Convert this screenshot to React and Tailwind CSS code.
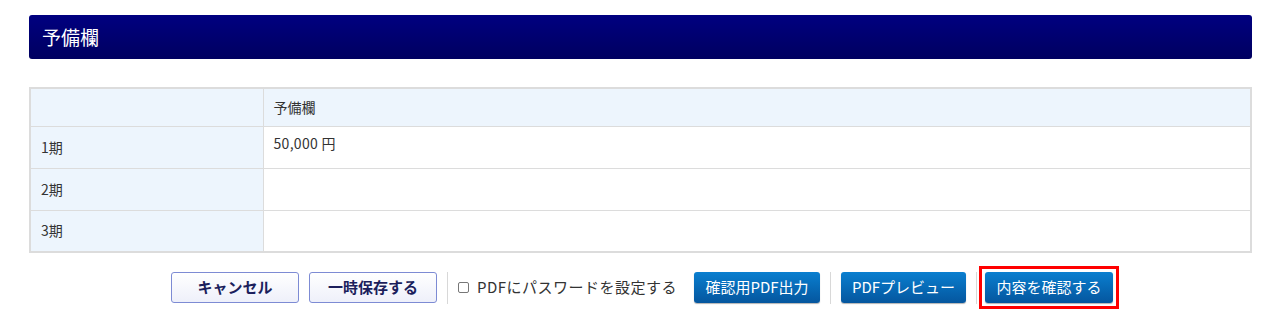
const font = "font-['Meiryo','Noto_Sans_CJK_JP',sans-serif]";

const rows = [
  { label: "1期", value: "50,000 円" },
  { label: "2期", value: "" },
  { label: "3期", value: "" },
];

function GhostButton({ children }) {
  return (
    <button className="w-[128px] h-[31px] rounded-[3px] border border-[#7d8bd4] bg-gradient-to-b from-white to-[#eef0fa] text-[15px] font-bold text-[#1c1f5c]">
      {children}
    </button>
  );
}

function BlueButton({ children, w = "w-[126px]", className = "" }) {
  return (
    <button className={`${w} ${className} h-[31px] rounded-[3px] bg-gradient-to-b from-[#0a7fd0] to-[#05569e] text-[15px] text-white shadow-[0_1px_1px_rgba(0,0,0,0.3)]`}>
      {children}
    </button>
  );
}

function Sep() {
  return <div className="w-px h-[32px] bg-[#d8d8d8]" />;
}

export default function App() {
  return (
    <div className={`${font} bg-white min-h-[323px] pl-[29px] pr-[28px] pt-[15px]`}>
      <div className="h-[44px] rounded-[3px] bg-gradient-to-b from-[#000080] to-[#000060] flex items-center px-[13px]">
        <h2 className="text-[19px] text-white">予備欄</h2>
      </div>

      <table className="mt-[28px] w-full border-collapse border-2 border-[#dcdcdc] text-[14px] text-[#333]">
        <thead>
          <tr className="h-[38px] bg-[#edf5fd]">
            <th className="w-[233px] border border-[#dcdcdc]" />
            <th className="border border-[#dcdcdc] text-left font-normal px-[10px]">予備欄</th>
          </tr>
        </thead>
        <tbody>
          {rows.map(r => (
            <tr key={r.label} className="h-[42px]">
              <td className="bg-[#edf5fd] border border-[#dcdcdc] px-[10px]">{r.label}</td>
              <td className="border border-[#dcdcdc] px-[10px] align-top pt-[6px] tracking-[0.3px]">{r.value}</td>
            </tr>
          ))}
        </tbody>
      </table>

      <div className="flex items-center justify-center gap-[10px] mt-[13px] pl-[9px]">
        <GhostButton>キャンセル</GhostButton>
        <GhostButton>一時保存する</GhostButton>
        <Sep />
        <label className="flex items-center gap-[8px] text-[15px] tracking-[0.5px] text-[#333]">
          <span className="w-[11px] h-[11px] rounded-[2px] border border-[#777] bg-white" />
          PDFにパスワードを設定する
        </label>
        <BlueButton className="ml-[7px]">確認用PDF出力</BlueButton>
        <Sep />
        <BlueButton w="w-[125px]">PDFプレビュー</BlueButton>
        <Sep />
        <div className="-ml-[8px] border-[3px] border-[#ff0000] p-[3px]">
          <BlueButton w="w-[128px]">内容を確認する</BlueButton>
        </div>
      </div>
    </div>
  );
}
